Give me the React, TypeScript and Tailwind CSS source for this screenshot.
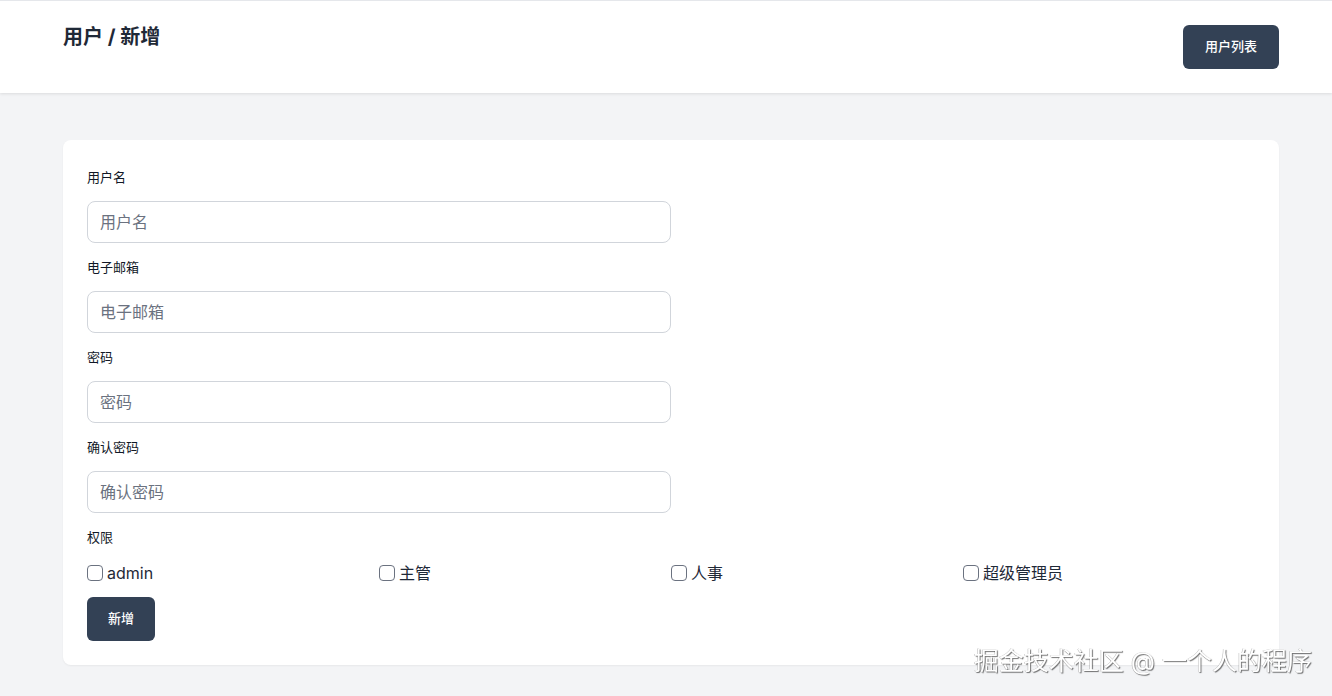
import React, { useState } from 'react';

const FONT = "font-['Inter','Noto_Sans_CJK_SC',sans-serif]";

const fields = [
  { label: '用户名', type: 'text' },
  { label: '电子邮箱', type: 'email' },
  { label: '密码', type: 'password' },
  { label: '确认密码', type: 'password' },
];

const roles = ['admin', '主管', '人事', '超级管理员'];

export default function App() {
  const [checked, setChecked] = useState<string[]>([]);

  const toggle = (role: string) => {
    setChecked(cur => (cur.includes(role) ? cur.filter(r => r !== role) : [...cur, role]));
  };

  return (
    <div className={`min-h-screen bg-[#f3f4f6] text-[#111827] ${FONT}`}>
      <header className="bg-white border-t border-[#e5e7eb] shadow-[0_1px_3px_rgba(0,0,0,0.1)]">
        <div className="flex items-start justify-between pl-[63px] pr-[53px] pt-[24px] pb-[24px]">
          <h1 className="text-[20px] leading-7 font-bold text-[#1f2937] -mt-[2px]">用户 / 新增</h1>
          <button className="h-[44px] w-[96px] rounded-md bg-[#334155] text-white text-[13px] font-medium">
            用户列表
          </button>
        </div>
      </header>

      <main className="pl-[63px] pr-[53px] pt-[47px] pb-[31px]">
        <div className="bg-white rounded-lg shadow-[0_1px_2px_rgba(0,0,0,0.05)] px-6 pt-[27px] pb-6">
          {fields.map(f => (
            <div key={f.label}>
              <label className="block text-[13px] leading-5 text-[#111827] mb-[14px]">{f.label}</label>
              <input
                type={f.type}
                placeholder={f.label}
                className="block w-[584px] h-[42px] rounded-lg border border-[#d1d5db] px-3 text-[16px] placeholder:text-[#6b7280] outline-none mb-[14px]"
              />
            </div>
          ))}

          <label className="block text-[13px] leading-5 mb-[16px]">权限</label>
          <div className="grid grid-cols-4 mb-[14px]">
            {roles.map(r => (
              <label key={r} className="flex items-center gap-1 text-[16px] leading-5 text-[#1f2937]">
                <input
                  type="checkbox"
                  checked={checked.includes(r)}
                  onChange={() => toggle(r)}
                  className="appearance-none w-4 h-4 rounded-[4px] border border-[#6b7280] bg-white checked:bg-[#334155]"
                />
                {r}
              </label>
            ))}
          </div>

          <button className="h-[44px] w-[68px] rounded-md bg-[#334155] text-white text-[13px] font-medium">
            新增
          </button>
        </div>
      </main>

      <div className="fixed right-[20px] bottom-[18px] text-[25px] leading-[34px] text-white [text-shadow:1px_1px_1px_rgba(0,0,0,0.55),-0.5px_-0.5px_0.5px_rgba(0,0,0,0.3)] pointer-events-none">
        掘金技术社区 @ 一个人的程序
      </div>
    </div>
  );
}
